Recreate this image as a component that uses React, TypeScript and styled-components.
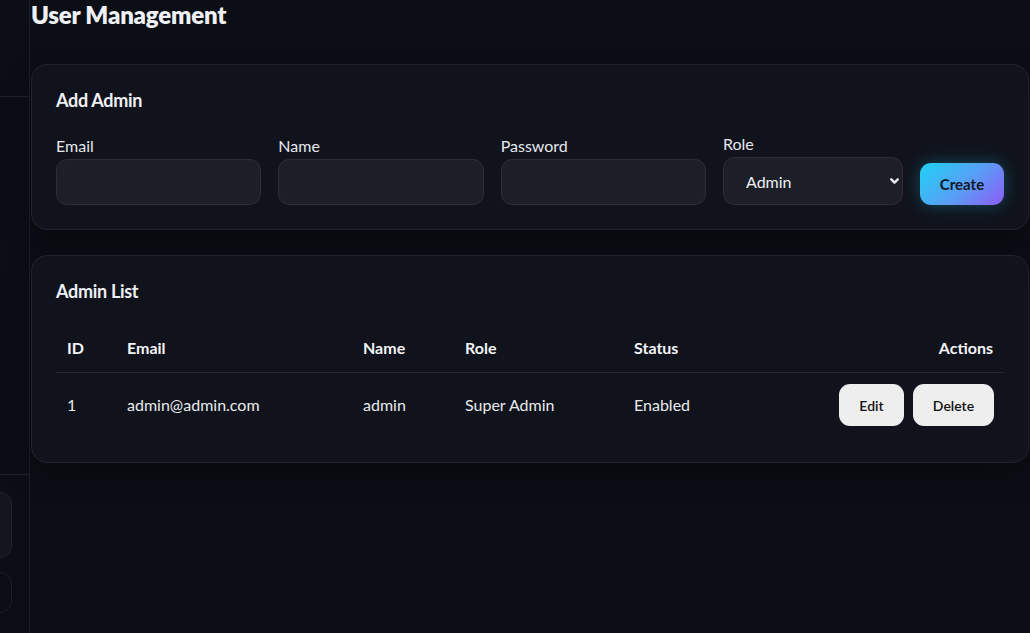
import React from "react";
import styled, { createGlobalStyle } from "styled-components";

const Global = createGlobalStyle`
  html, body { margin: 0; padding: 0; background: #0b0e15; }
  body { font-family: "Lato", "Noto Sans", sans-serif; color: #eceef2; }
  * { box-sizing: border-box; }
`;

const Shell = styled.div`
  display: flex;
  height: 633px;
  overflow: hidden;
  background: #0b0e15;
`;

const Sidebar = styled.aside`
  width: 30px;
  flex-shrink: 0;
  border-right: 1px solid #1b1f27;
  overflow: hidden;
  display: flex;
  justify-content: flex-end;
`;

const SidebarInner = styled.div`
  width: 240px;
  flex-shrink: 0;
  display: flex;
  flex-direction: column;
  padding-right: 17px;
`;

const SideHeader = styled.div`
  height: 97px;
  border-bottom: 1px solid #1d212a;
  margin-right: -17px;
`;

const SideNav = styled.div`
  flex: 1;
`;

const SideFooter = styled.div`
  border-top: 1px solid #1d212a;
  margin-right: -17px;
  padding: 17px 17px 20px 0;
  display: flex;
  flex-direction: column;
  gap: 14px;
`;

const UserCard = styled.div`
  height: 66px;
  border-radius: 12px;
  background: #12151e;
  border: 1px solid #1f232c;
`;

const LogoutBox = styled.div`
  height: 41px;
  border-radius: 12px;
  border: 1px solid #1b1f28;
`;

const Main = styled.main`
  flex: 1;
  min-width: 0;
  padding: 0 1px;
  display: flex;
  flex-direction: column;
`;

const PageTitle = styled.h1`
  margin: -1px 0 33px 0;
  font-size: 24px;
  line-height: 32px;
  font-weight: 800;
  color: #eef0f4;
  letter-spacing: -0.2px;
`;

const Card = styled.section`
  background: #10131c;
  border: 1px solid #1f232c;
  border-radius: 16px;
  padding: 24px;
  box-shadow: 0 12px 30px rgba(0, 0, 0, 0.35);
  margin-bottom: 25px;
`;

const CardTitle = styled.h2<{ $mb: number }>`
  margin: 0 0 ${(p) => p.$mb}px 0;
  font-size: 18px;
  line-height: 22px;
  font-weight: 700;
  color: #eef0f4;
  letter-spacing: -0.3px;
`;

const Form = styled.div`
  display: flex;
  align-items: flex-end;
  gap: 17px;
`;

const Field = styled.label<{ $w?: number }>`
  display: flex;
  flex-direction: column;
  gap: 3px;
  ${(p) => (p.$w ? `width: ${p.$w}px; flex-shrink: 0;` : `flex: 1;`)}
  font-size: 16px;
  line-height: 20px;
  color: #e6e8ec;
`;

const Input = styled.input`
  height: 46px;
  width: 100%;
  background: #1c1f28;
  border: 1px solid #2a2e37;
  border-radius: 11px;
  color: #eef0f4;
  font: inherit;
  padding: 0 14px;
  outline: none;
`;

const SelectWrap = styled.div`
  position: relative;
  height: 48px;
`;

const Select = styled.select`
  appearance: none;
  -webkit-appearance: none;
  width: 100%;
  height: 100%;
  background: #1c1f28;
  border: 1px solid #2a2e37;
  border-radius: 11px;
  color: #eef0f4;
  font-family: inherit;
  font-size: 16px;
  padding: 0 0 0 22px;
  outline: none;
`;

const Chevron = styled.svg`
  position: absolute;
  right: 2px;
  top: 50%;
  transform: translateY(-50%);
  pointer-events: none;
`;

const CreateButton = styled.button`
  height: 42px;
  width: 84px;
  flex-shrink: 0;
  border: none;
  border-radius: 11px;
  background: linear-gradient(135deg, #1fd2f3 0%, #5b9cf6 55%, #8f5cf6 100%);
  color: #111827;
  font-family: inherit;
  font-size: 15px;
  font-weight: 700;
  box-shadow: 0 0 16px rgba(34, 200, 238, 0.3);
`;

const Table = styled.table`
  width: 100%;
  border-collapse: collapse;
  table-layout: fixed;
  font-size: 16px;
`;

const Th = styled.th<{ $w?: number; $right?: boolean }>`
  ${(p) => (p.$w ? `width: ${p.$w}px;` : "")}
  text-align: ${(p) => (p.$right ? "right" : "left")};
  padding: 13px 11px;
  line-height: 22px;
  font-weight: 700;
  color: #f3f4f6;
  border-bottom: 1px solid #232731;
`;

const Td = styled.td<{ $right?: boolean }>`
  text-align: ${(p) => (p.$right ? "right" : "left")};
  padding: 11px 11px 12px;
  line-height: 22px;
  color: #e8eaee;
  vertical-align: middle;
`;

const Actions = styled.div`
  display: inline-flex;
  gap: 9px;
`;

const LightButton = styled.button<{ $w: number }>`
  width: ${(p) => p.$w}px;
  height: 42px;
  border: none;
  border-radius: 11px;
  background: #eeeeee;
  color: #111111;
  font-family: inherit;
  font-size: 14px;
  font-weight: 600;
`;

export default function App() {
  return (
    <>
      <Global />
      <Shell>
        <Sidebar>
          <SidebarInner>
            <SideHeader />
            <SideNav />
            <SideFooter>
              <UserCard />
              <LogoutBox />
            </SideFooter>
          </SidebarInner>
        </Sidebar>
        <Main>
          <PageTitle>User Management</PageTitle>
          <Card>
            <CardTitle $mb={23}>Add Admin</CardTitle>
            <Form>
              <Field>
                Email
                <Input type="email" />
              </Field>
              <Field>
                Name
                <Input type="text" />
              </Field>
              <Field>
                Password
                <Input type="password" />
              </Field>
              <Field $w={180}>
                Role
                <SelectWrap>
                  <Select defaultValue="admin">
                    <option value="admin">Admin</option>
                    <option value="super">Super Admin</option>
                  </Select>
                  <Chevron width="13" height="13" viewBox="0 0 24 24" fill="none" stroke="#e5e7eb" strokeWidth="4.5" strokeLinecap="round" strokeLinejoin="round">
                    <path d="M6 9l6 6 6-6" />
                  </Chevron>
                </SelectWrap>
              </Field>
              <CreateButton>Create</CreateButton>
            </Form>
          </Card>
          <Card>
            <CardTitle $mb={22}>Admin List</CardTitle>
            <Table>
              <thead>
                <tr>
                  <Th $w={60}>ID</Th>
                  <Th $w={236}>Email</Th>
                  <Th $w={102}>Name</Th>
                  <Th $w={169}>Role</Th>
                  <Th $w={205}>Status</Th>
                  <Th $right>Actions</Th>
                </tr>
              </thead>
              <tbody>
                <tr>
                  <Td>1</Td>
                  <Td>admin@admin.com</Td>
                  <Td>admin</Td>
                  <Td>Super Admin</Td>
                  <Td>Enabled</Td>
                  <Td $right>
                    <Actions>
                      <LightButton $w={65}>Edit</LightButton>
                      <LightButton $w={81}>Delete</LightButton>
                    </Actions>
                  </Td>
                </tr>
              </tbody>
            </Table>
          </Card>
        </Main>
      </Shell>
    </>
  );
}
